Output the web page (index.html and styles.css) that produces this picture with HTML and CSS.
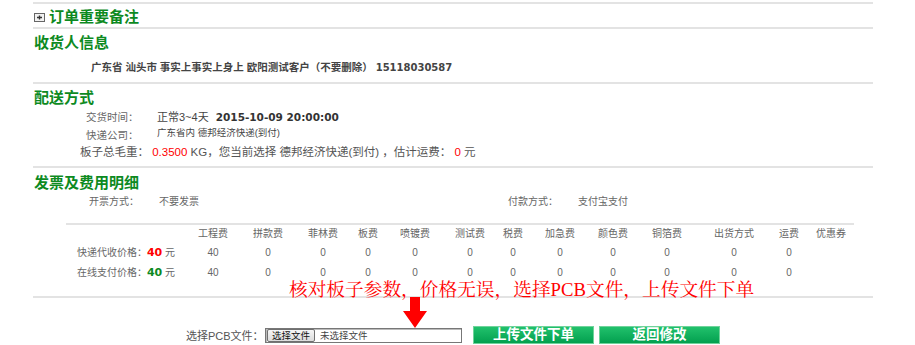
FILE: index.html
```html
<!DOCTYPE html>
<html>
    <head>
        <meta charset="utf-8">
        <title>订单确认</title>
        <link rel="stylesheet" href="styles.css">
    </head>
    <body>
        <div class="page">
            <div class="sec sec-note">
                <h3 class="title">
                    <svg class="plus-ico" viewBox="0 0 11 9">
                        <rect x="0.5" y="0.5" width="10" height="8" fill="#f2f2f2" stroke="#666"/>
                        <path d="M3 4.5h5M5.5 2.5v4" stroke="#333" stroke-width="1.4"/>
                    </svg>
                    订单重要备注
                </h3>
            </div>

            <div class="sec sec-recv">
                <h3 class="title">收货人信息</h3>
                <p class="addr">广东省 汕头市 事实上事实上身上 欧阳测试客户（不要删除） <span class="phone">15118030587</span></p>
            </div>

            <div class="sec sec-ship">
                <h3 class="title">配送方式</h3>
                <div class="kv">
                    <span class="k">交货时间：</span>
                    <span class="v">正常3~4天 <b class="dt">2015-10-09 20:00:00</b></span>
                </div>
                <div class="kv">
                    <span class="k">快递公司：</span>
                    <span class="v v-small">广东省内 德邦经济快递(到付)</span>
                </div>
                <div class="weight">板子总毛重： <span class="red">0.3500</span> KG，您当前选择 德邦经济快递(到付) ，估计运费： <span class="red">0</span> 元</div>
            </div>

            <div class="sec sec-fee">
                <h3 class="title">发票及费用明细</h3>
                <div class="inv">
                    <div class="inv-cell"><span class="k">开票方式：</span><span>不要发票</span></div>
                    <div class="inv-cell"><span class="k">付款方式：</span><span>支付宝支付</span></div>
                </div>
                <div class="fee-wrap">
                    <table class="fee">
                        <tr>
                            <th class="w120"></th>
                            <th class="w54">工程费</th>
                            <th class="w56">拼款费</th>
                            <th class="w54">菲林费</th>
                            <th class="w36">板费</th>
                            <th class="w58">喷镀费</th>
                            <th class="w52">测试费</th>
                            <th class="w34">税费</th>
                            <th class="w60">加急费</th>
                            <th class="w46">颜色费</th>
                            <th class="w62">铜箔费</th>
                            <th class="w72">出货方式</th>
                            <th class="w38">运费</th>
                            <th class="w46">优惠券</th>
                        </tr>
                        <tr>
                            <td class="row-lbl">快递代收价格：<b class="price red">40</b> 元</td>
                            <td>40</td><td>0</td><td>0</td><td>0</td><td>0</td><td>0</td>
                            <td>0</td><td>0</td><td>0</td><td>0</td><td>0</td><td>0</td><td></td>
                        </tr>
                        <tr>
                            <td class="row-lbl">在线支付价格：<b class="price green">40</b> 元</td>
                            <td>40</td><td>0</td><td>0</td><td>0</td><td>0</td><td>0</td>
                            <td>0</td><td>0</td><td>0</td><td>0</td><td>0</td><td>0</td><td></td>
                        </tr>
                    </table>
                </div>
            </div>

            <div class="sec sec-upload">
                <div class="upload-row">
                    <span class="up-label">选择PCB文件：</span>
                    <div class="file-box">
                        <span class="file-btn">选择文件</span>
                        <span class="file-name">未选择文件</span>
                    </div>
                    <a href="#" class="green-btn btn-first">上传文件下单</a>
                    <a href="#" class="green-btn">返回修改</a>
                </div>
            </div>

            <div class="tip">核对板子参数，价格无误，选择PCB文件，上传文件下单</div>
            <svg class="tip-arrow" viewBox="0 0 24 31">
                <path d="M7 0H17V14H24L12 31L0 14H7Z" fill="#f00"/>
            </svg>
        </div>
    </body>
</html>
```

FILE: styles.css
```css
body {
    margin: 0;
    background: #fff;
    font-family: "Liberation Sans", "Noto Sans CJK SC", sans-serif;
    font-size: 10.5px;
    color: #555;
}

.page {
    position: relative;
    width: 840px;
    margin-left: 33px;
    padding-top: 2px;
}

.sec {
    border-top: 2px solid #e3e3e3;
}

.title {
    margin: 0;
    display: flex;
    align-items: center;
    gap: 4px;
    padding-left: 1px;
    font-size: 15px;
    font-weight: bold;
    color: #0d8a1f;
    line-height: 20px;
}

.plus-ico {
    width: 11px;
    height: 9px;
}

/* order note */
.sec-note {
    padding-top: 3px;
}

/* receiver */
.sec-recv {
    padding: 4px 0;
}

.addr {
    margin: 4px 0 0 58px;
    line-height: 20px;
    font-weight: bold;
    color: #444;
}

.phone {
    font-family: "DejaVu Sans", sans-serif;
    font-size: 10px;
}

/* shipping */
.sec-ship {
    padding: 5px 0;
}

.sec-ship .title {
    line-height: 18px;
}

.kv {
    display: flex;
    align-items: center;
    height: 18px;
    padding-left: 53px;
}

.kv .k {
    width: 71px;
    color: #666;
}

.kv .v {
    color: #444;
    font-size: 11px;
}

.kv .v-small {
    font-size: 9.5px;
    margin-top: -4px;
}

.dt {
    font-family: "DejaVu Sans", sans-serif;
    font-size: 10.5px;
    margin-left: 4px;
    color: #333;
}

.weight {
    height: 18px;
    line-height: 18px;
    padding-left: 47px;
    font-size: 11.5px;
    color: #555;
}

.red {
    color: #f00;
}

.green {
    color: #0d8a1f;
}

/* invoice + fees */
.sec-fee {
    padding: 5px 0 13px;
}

.inv {
    display: flex;
    height: 18px;
    line-height: 18px;
    padding-left: 56px;
    color: #666;
    font-size: 10px;
}

.inv-cell {
    display: flex;
}

.inv-cell:first-child {
    width: 419px;
}

.inv-cell .k {
    width: 70px;
}

.fee-wrap {
    margin: 12px 0 0 33px;
    width: 788px;
    border-top: 2px solid #e3e3e3;
}

.fee {
    width: 788px;
    table-layout: fixed;
    border-collapse: collapse;
    font-size: 10px;
    color: #666;
}

.fee th,
.fee td {
    padding: 0;
    text-align: center;
    font-weight: normal;
    line-height: 12px;
}

.fee th {
    height: 18px;
}

.fee td {
    height: 20px;
}

.fee .row-lbl {
    color: #666;
}

.price {
    font-family: "DejaVu Sans", sans-serif;
    font-size: 11px;
}

.w120 { width: 120px; }
.w34 { width: 34px; }
.w36 { width: 36px; }
.w38 { width: 38px; }
.w46 { width: 46px; }
.w52 { width: 52px; }
.w54 { width: 54px; }
.w56 { width: 56px; }
.w58 { width: 58px; }
.w60 { width: 60px; }
.w62 { width: 62px; }
.w72 { width: 72px; }

/* upload row */
.sec-upload {
    padding-top: 28px;
}

.upload-row {
    display: flex;
    align-items: center;
    height: 18px;
    padding-left: 153px;
}

.up-label {
    width: 79px;
    font-size: 11px;
    color: #555;
}

.file-box {
    display: flex;
    align-items: center;
    width: 195px;
    height: 13px;
    border: 1px solid #777;
    box-shadow: inset 1px 1px 0 #bbb;
    background: #fff;
}

.file-btn {
    height: 11px;
    line-height: 11px;
    padding: 0 4px;
    margin-left: 1px;
    border: 1px solid #707070;
    border-radius: 2px;
    background: linear-gradient(#f6f6f6, #dcdcdc);
    color: #111;
    font-size: 9.5px;
}

.file-name {
    margin-left: 5px;
    font-size: 9.5px;
    color: #444;
}

.green-btn {
    display: block;
    width: 119px;
    height: 16px;
    margin-left: 5px;
    border: 1px solid #6fd39a;
    background: linear-gradient(#21c16c, #03a04f);
    color: #fff;
    font-size: 13.5px;
    font-weight: bold;
    line-height: 16px;
    text-align: center;
    text-decoration: none;
}

.btn-first {
    margin-left: 11px;
}

/* overlay hint */
.tip {
    position: absolute;
    left: 256px;
    top: 281px;
    font-family: "Liberation Serif", "Noto Serif CJK SC", "Noto Sans CJK SC", serif;
    font-size: 18.7px;
    line-height: 18px;
    color: #f00;
    white-space: nowrap;
}

.tip-arrow {
    position: absolute;
    left: 370px;
    top: 297px;
    width: 24px;
    height: 31px;
}
```
